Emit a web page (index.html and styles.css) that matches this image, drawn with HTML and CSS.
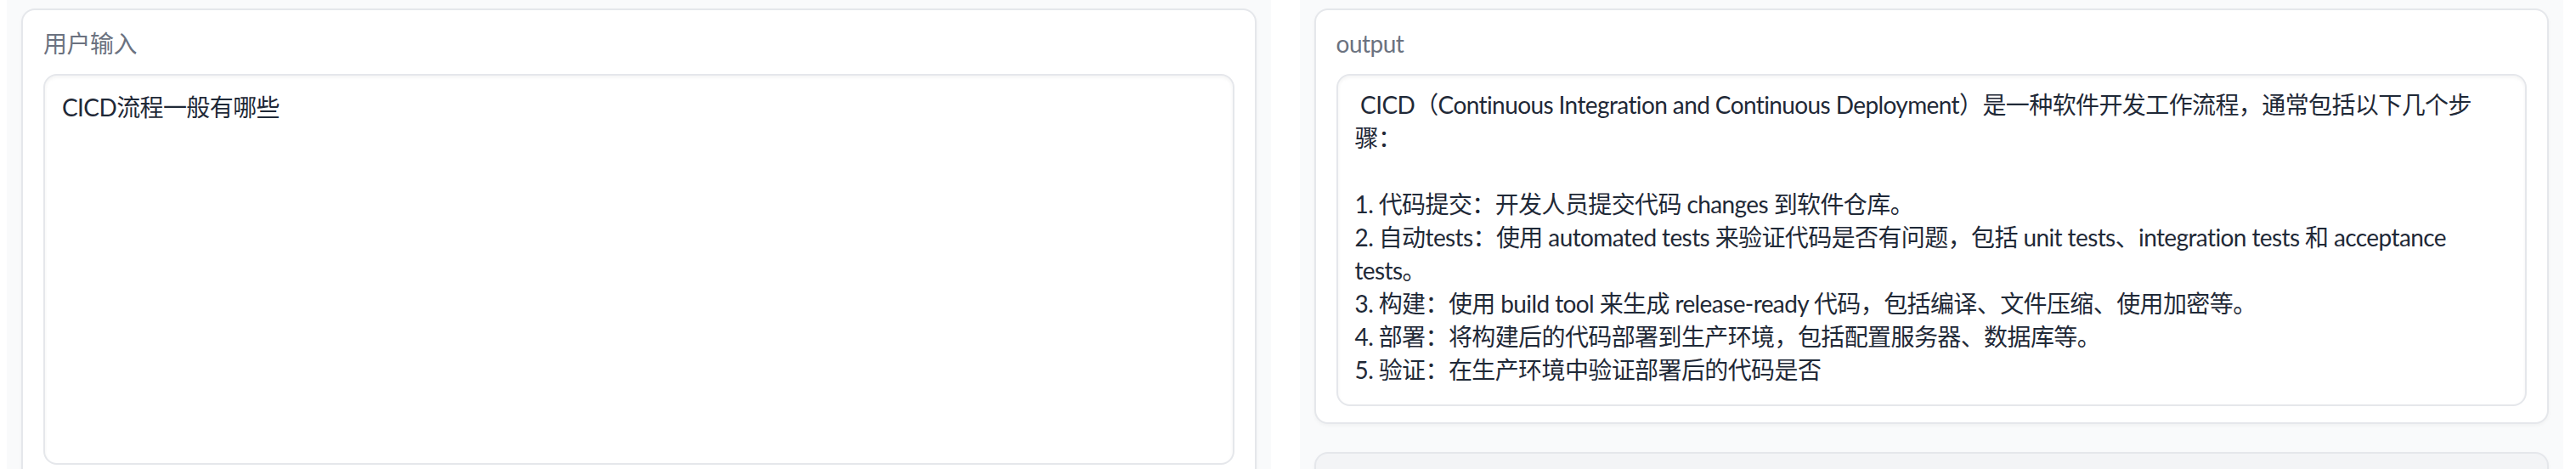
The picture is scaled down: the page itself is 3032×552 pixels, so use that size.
FILE: index.html
```html
<!doctype html>
<html lang="zh-CN">
<head>
	<meta charset="UTF-8">
	<title>CICD</title>
	<link rel="stylesheet" href="styles.css">
</head>
<body>
	<div class="app">
		<div class="col">
			<div class="block">
				<label class="block-label" for="user-input">用户输入</label>
				<textarea class="input-box" id="user-input" readonly>CICD流程一般有哪些</textarea>
			</div>
		</div>
		<div class="col">
			<div class="block">
				<span class="block-label">output</span>
				<div class="output-box"> CICD（Continuous Integration and Continuous Deployment）是一种软件开发工作流程，通常包括以下几个步骤：

1. 代码提交：开发人员提交代码 changes 到软件仓库。
2. 自动tests：使用 automated tests 来验证代码是否有问题，包括 unit tests、integration tests 和 acceptance tests。
3. 构建：使用 build tool 来生成 release-ready 代码，包括编译、文件压缩、使用加密等。
4. 部署：将构建后的代码部署到生产环境，包括配置服务器、数据库等。
5. 验证：在生产环境中验证部署后的代码是否</div>
			</div>
			<div class="block block-muted"></div>
		</div>
	</div>
</body>
</html>
```

FILE: styles.css
```css
/*page*/
*{margin: 0;padding: 0;box-sizing: border-box;}
html,body{background: #fff;height: 100%;overflow: hidden;}
body{font-family: Lato, "Noto Sans CJK SC", sans-serif;color: #1f2937;}

.app{display: flex;gap: 34px;padding: 0 15px 0 8px;height: 100%;}
.col{flex: 1;display: flex;flex-direction: column;gap: 33px;background: #f9fafb;padding: 10px 17px 0;min-width: 0;}

/*blocks*/
.block{background: #fff;border: 2px solid #e5e7eb;border-radius: 16px;padding: 20px 24px 19px;
	box-shadow: 0 2px 4px rgba(0,0,0,.04);}
.block-muted{background: #f3f4f6;height: 120px;flex: none;}
.block-label{display: block;font-size: 28px;line-height: 39px;color: #6b7280;margin-bottom: 16px;letter-spacing: -.5px;}

/*text areas*/
.input-box,.output-box{display: block;width: 100%;border: 2px solid #e5e7eb;border-radius: 16px;background: #fff;
	font-family: inherit;font-size: 28px;line-height: 39px;color: #1f2937;padding: 15px 20px 21px;letter-spacing: -.6px;
	box-shadow: inset 0 2px 4px rgba(0,0,0,.05);}
.input-box{height: 460px;padding-top: 18px;resize: none;overflow: hidden;outline: none;}
.output-box{white-space: pre-wrap;word-break: normal;}
```
